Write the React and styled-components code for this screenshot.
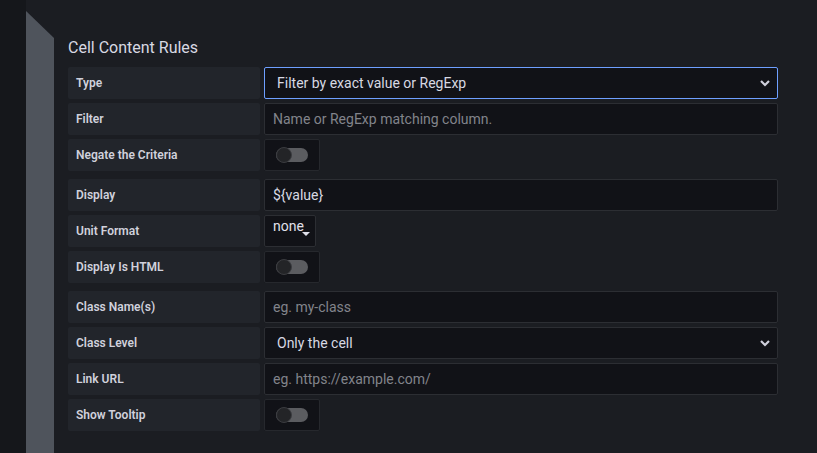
import React from 'react';
import styled, { createGlobalStyle } from 'styled-components';

const GlobalStyle = createGlobalStyle`
  html, body {
    margin: 0;
    padding: 0;
    height: 100%;
    background: #181b1f;
  }
  #root {
    height: 100%;
  }
  * {
    box-sizing: border-box;
  }
`;

const Page = styled.div`
  display: flex;
  width: 817px;
  height: 453px;
  overflow: hidden;
  font-family: Roboto, "Liberation Sans", sans-serif;
  background: #1b1d22;
`;

const Gutter = styled.div`
  width: 26px;
  flex-shrink: 0;
  background: #15171b;
`;

const Rail = styled.div`
  width: 28px;
  flex-shrink: 0;
  margin-top: 11px;
  background: #4f545c;
  clip-path: polygon(0 0, 100% 27px, 100% 100%, 0 100%);
`;

const Content = styled.div`
  flex: 1;
  padding: 37px 0 0 14px;
`;

const Heading = styled.h3`
  margin: 0 0 8px;
  font-size: 16px;
  line-height: 22px;
  font-weight: 400;
  color: #d8d9e3;
`;

const Group = styled.div`
  display: flex;
  flex-direction: column;
  gap: 4px;
  margin-bottom: 8px;
`;

const Row = styled.div`
  display: flex;
  gap: 4px;
  height: 32px;
`;

const Label = styled.div`
  width: 192px;
  display: flex;
  align-items: center;
  padding: 0 8px;
  background: #22252b;
  border-radius: 2px;
  font-size: 12px;
  font-weight: 600;
  color: #d0d1dc;
`;

const Input = styled.input`
  width: 514px;
  height: 32px;
  padding: 0 8px;
  background: #111217;
  border: 1px solid #2c2e33;
  border-radius: 2px;
  font-family: inherit;
  font-size: 14px;
  color: #d8d9e3;
  outline: none;
  &::placeholder {
    color: #82848b;
  }
`;

const SelectBox = styled.div`
  position: relative;
  width: 514px;
  height: 32px;
  display: flex;
  align-items: center;
  padding: 0 12px;
  background: #111217;
  border: 1px solid ${({ focused }) => (focused ? '#6e9fff' : '#2c2e33')};
  border-radius: 2px;
  font-size: 14px;
  color: #d8d9e3;
`;

const Chevron = styled.svg`
  position: absolute;
  right: 6px;
  top: 50%;
  transform: translateY(-50%);
`;

const UnitBox = styled.div`
  position: relative;
  width: 52px;
  height: 32px;
  padding: 2px 0 0 8px;
  background: #111217;
  border: 1px solid #2c2e33;
  border-radius: 2px;
  font-size: 14px;
  line-height: 16px;
  color: #e0e0ea;
`;

const Caret = styled.span`
  position: absolute;
  left: 37px;
  top: 16px;
  width: 0;
  height: 0;
  border-left: 4px solid transparent;
  border-right: 4px solid transparent;
  border-top: 4px solid #e0e0ea;
`;

const SwitchBox = styled.div`
  width: 56px;
  height: 32px;
  display: flex;
  align-items: center;
  justify-content: center;
  background: #111217;
  border: 1px solid #26282d;
  border-radius: 2px;
`;

const Track = styled.div`
  position: relative;
  width: 32px;
  height: 14px;
  border-radius: 7px;
  background: #5b5c60;
`;

const Knob = styled.div`
  position: absolute;
  left: 0;
  top: -1px;
  width: 16px;
  height: 16px;
  border-radius: 50%;
  background: #232427;
  border: 1px solid #3b3c40;
`;

const Select = ({ value, focused }) => (
  <SelectBox focused={focused}>
    {value}
    <Chevron width="12" height="12" viewBox="0 0 12 12">
      <path d="M2 4 L6 8 L10 4" fill="none" stroke="#d0d0dc" strokeWidth="2.2" />
    </Chevron>
  </SelectBox>
);

const Switch = () => (
  <SwitchBox>
    <Track>
      <Knob />
    </Track>
  </SwitchBox>
);

export default function App() {
  return (
    <>
      <GlobalStyle />
      <Page>
        <Gutter />
        <Rail />
        <Content>
          <Heading>Cell Content Rules</Heading>
          <Group>
            <Row>
              <Label>Type</Label>
              <Select value="Filter by exact value or RegExp" focused />
            </Row>
            <Row>
              <Label>Filter</Label>
              <Input placeholder="Name or RegExp matching column." />
            </Row>
            <Row>
              <Label>Negate the Criteria</Label>
              <Switch />
            </Row>
          </Group>
          <Group>
            <Row>
              <Label>Display</Label>
              <Input defaultValue="${value}" />
            </Row>
            <Row>
              <Label>Unit Format</Label>
              <UnitBox>
                none
                <Caret />
              </UnitBox>
            </Row>
            <Row>
              <Label>Display Is HTML</Label>
              <Switch />
            </Row>
          </Group>
          <Group>
            <Row>
              <Label>Class Name(s)</Label>
              <Input placeholder="eg. my-class" />
            </Row>
            <Row>
              <Label>Class Level</Label>
              <Select value="Only the cell" />
            </Row>
            <Row>
              <Label>Link URL</Label>
              <Input placeholder="eg. https://example.com/" />
            </Row>
            <Row>
              <Label>Show Tooltip</Label>
              <Switch />
            </Row>
          </Group>
        </Content>
      </Page>
    </>
  );
}
